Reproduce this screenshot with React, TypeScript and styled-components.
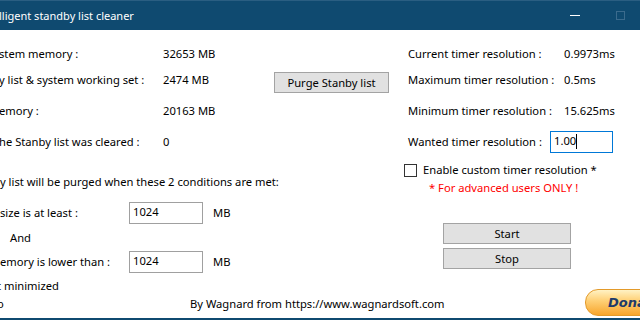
import React from 'react';
import styled, { createGlobalStyle } from 'styled-components';

const GlobalStyle = createGlobalStyle`
  html, body {
    margin: 0;
    padding: 0;
    background: #ffffff;
  }
  * {
    box-sizing: border-box;
  }
`;

const Window = styled.div`
  width: 640px;
  height: 320px;
  overflow: hidden;
  display: flex;
  flex-direction: column;
  background: #ffffff;
  font-family: 'Noto Sans', 'Open Sans', sans-serif;
  font-size: 11.2px;
  color: #000000;
  border-bottom: 2px solid #0f4a70;
`;

const TitleBar = styled.div`
  height: 30px;
  flex: none;
  display: flex;
  align-items: center;
  background: #0f4a70;
  border-top: 1px solid #2a5e82;
  color: #ffffff;
  font-size: 11px;
`;

const Title = styled.div`
  flex: 1;
  margin-left: -1px;
`;

const CaptionButton = styled.div`
  width: 45px;
  height: 29px;
  display: flex;
  align-items: center;
  justify-content: center;
`;

const MinimizeGlyph = styled.span`
  width: 10px;
  height: 1px;
  background: #ffffff;
  margin-left: 4px;
`;

const MaximizeGlyph = styled.span`
  width: 9px;
  height: 9px;
  border: 1px solid #3b6b8d;
  margin-left: 6px;
  margin-top: -1px;
`;

const Main = styled.div`
  flex: 1;
  display: flex;
`;

const LeftPanel = styled.div`
  width: 404px;
  flex: none;
  padding-top: 11px;
  display: flex;
  flex-direction: column;
`;

const RightPanel = styled.div`
  flex: 1;
  padding-top: 11px;
  display: flex;
  flex-direction: column;
`;

const StatGrid = styled.div<{ $columns: string; $rows: string; $indent?: number }>`
  display: grid;
  grid-template-columns: ${(p) => p.$columns};
  grid-template-rows: ${(p) => p.$rows};
  align-items: center;
  padding-left: ${(p) => p.$indent ?? 0}px;
  white-space: nowrap;
`;

const Label = styled.span<{ $shift?: number }>`
  line-height: 16px;
  white-space: nowrap;
  margin-left: ${(p) => p.$shift ?? 0}px;
`;

const WinButton = styled.button<{ $width: number; $height: number }>`
  width: ${(p) => p.$width}px;
  height: ${(p) => p.$height}px;
  padding: 0;
  background: #e1e1e1;
  border: 1px solid #a3a3a3;
  border-radius: 0;
  font-family: inherit;
  font-size: inherit;
  color: #000000;
  line-height: 16px;
`;

const PurgeButton = styled(WinButton)`
  align-self: end;
`;

const Heading = styled.div`
  margin-top: 19px;
  line-height: 16px;
  white-space: nowrap;
`;

const ConditionRow = styled.div<{ $top: number }>`
  display: grid;
  grid-template-columns: 129px 84px auto;
  align-items: center;
  height: 22px;
  margin-top: ${(p) => p.$top}px;
`;

const TextBox = styled.div<{ $width: number; $focused?: boolean }>`
  width: ${(p) => p.$width}px;
  height: 22px;
  border: 1px solid ${(p) => (p.$focused ? '#0078d7' : '#a0a0a0')};
  background: #ffffff;
  padding: 1px 0 0 3px;
  line-height: 16px;
  display: flex;
  align-items: flex-start;
`;

const Caret = styled.span`
  width: 1px;
  height: 15px;
  margin-top: 1px;
  background: #000000;
`;

const AndLabel = styled.div`
  margin: 6px 0 0 10px;
  line-height: 16px;
`;

const MinimizedLabel = styled.div`
  margin: 5px 0 0 -3px;
  line-height: 16px;
  white-space: nowrap;
`;

const WantedRow = styled.div`
  display: flex;
  align-items: center;
  height: 26px;
  padding-left: 4px;
`;

const WantedLabel = styled.span`
  width: 142px;
  flex: none;
  line-height: 16px;
  white-space: nowrap;
`;

const CheckRow = styled.div`
  display: flex;
  align-items: center;
  gap: 6px;
  height: 16px;
  margin-top: 7px;
`;

const CheckBox = styled.span`
  width: 13px;
  height: 13px;
  border: 1px solid #333333;
  background: #ffffff;
  flex: none;
`;

const Warning = styled.div`
  color: #ff0000;
  line-height: 16px;
  margin: 2px 0 0 25px;
  white-space: nowrap;
`;

const ActionButtons = styled.div`
  display: flex;
  flex-direction: column;
  gap: 4px;
  margin: 27px 0 0 39px;
`;

const Footer = styled.div`
  height: 24px;
  flex: none;
  display: flex;
  align-items: center;
  padding-bottom: 4px;
  white-space: nowrap;
`;

const FooterStub = styled.span`
  width: 193px;
  flex: none;
  margin-left: -3px;
  line-height: 16px;
`;

const Credit = styled.span`
  flex: 1;
  line-height: 16px;
`;

const Donate = styled.div`
  align-self: flex-start;
  margin-top: -5px;
  margin-right: -80px;
  width: 135px;
  height: 27px;
  flex: none;
  border-radius: 13px;
  border: 1px solid #e39a2a;
  background: linear-gradient(#fff2c4 0%, #ffd27a 40%, #f7a52c 100%);
  display: flex;
  align-items: center;
  padding-left: 22px;
  font-family: 'DejaVu Sans', Verdana, sans-serif;
  font-size: 13px;
  font-weight: bold;
  font-style: italic;
  color: #1d3a6a;
`;

const stats = [
  { label: 'stem memory :', value: '32653 MB' },
  { label: 'y list & system working set :', value: '2474 MB', purge: true },
  { label: 'emory :', value: '20163 MB' },
  { label: 'he Stanby list was cleared :', value: '0' },
];

const timers = [
  { label: 'Current timer resolution :', value: '0.9973ms' },
  { label: 'Maximum timer resolution :', value: '0.5ms' },
  { label: 'Minimum timer resolution :', value: '15.625ms' },
];

const App = () => {
  return (
    <>
      <GlobalStyle />
      <Window>
        <TitleBar>
          <Title>lligent standby list cleaner</Title>
          <CaptionButton>
            <MinimizeGlyph />
          </CaptionButton>
          <CaptionButton>
            <MaximizeGlyph />
          </CaptionButton>
        </TitleBar>

        <Main>
          <LeftPanel>
            <StatGrid $columns="163px 111px auto" $rows="26px 26px 36px 26px">
              {stats.map((s) => (
                <React.Fragment key={s.label}>
                  <Label $shift={-1}>{s.label}</Label>
                  <Label>{s.value}</Label>
                  {s.purge ? (
                    <PurgeButton $width={115} $height={21}>Purge Stanby list</PurgeButton>
                  ) : (
                    <span />
                  )}
                </React.Fragment>
              ))}
            </StatGrid>

            <Heading>y list will be purged when these 2 conditions are met:</Heading>

            <ConditionRow $top={12}>
              <Label>size is at least :</Label>
              <TextBox $width={74}>1024</TextBox>
              <Label>MB</Label>
            </ConditionRow>
            <AndLabel>And</AndLabel>
            <ConditionRow $top={5}>
              <Label>emory is lower than :</Label>
              <TextBox $width={74}>1024</TextBox>
              <Label>MB</Label>
            </ConditionRow>
            <MinimizedLabel>t minimized</MinimizedLabel>
          </LeftPanel>

          <RightPanel>
            <StatGrid $columns="156px auto" $rows="26px 26px 36px" $indent={4}>
              {timers.map((t) => (
                <React.Fragment key={t.label}>
                  <Label>{t.label}</Label>
                  <Label>{t.value}</Label>
                </React.Fragment>
              ))}
            </StatGrid>
            <WantedRow>
              <WantedLabel>Wanted timer resolution :</WantedLabel>
              <TextBox $width={63} $focused>
                1.00
                <Caret />
              </TextBox>
            </WantedRow>
            <CheckRow>
              <CheckBox />
              <Label>Enable custom timer resolution *</Label>
            </CheckRow>
            <Warning>* For advanced users ONLY !</Warning>
            <ActionButtons>
              <WinButton $width={128} $height={21}>Start</WinButton>
              <WinButton $width={128} $height={21}>Stop</WinButton>
            </ActionButtons>
          </RightPanel>
        </Main>

        <Footer>
          <FooterStub>o</FooterStub>
          <Credit>By Wagnard from https://www.wagnardsoft.com</Credit>
          <Donate>Donate</Donate>
        </Footer>
      </Window>
    </>
  );
};

export default App;
